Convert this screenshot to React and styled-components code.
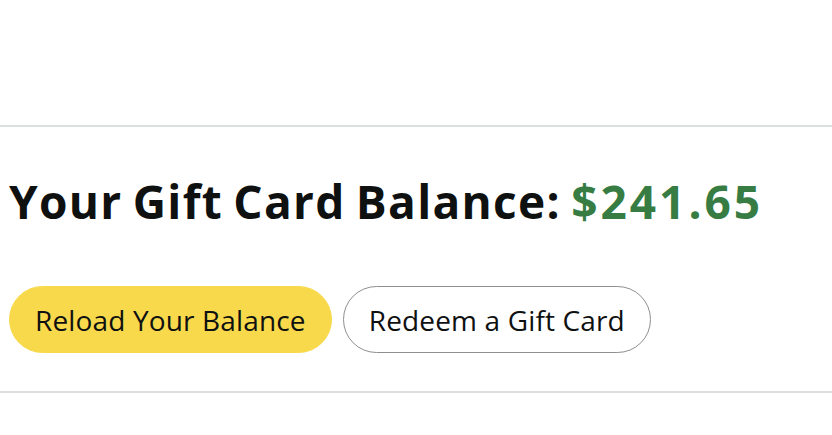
import React from 'react'
import styled, { createGlobalStyle } from 'styled-components'

const GlobalStyle = createGlobalStyle`
  * { box-sizing: border-box; }
  body {
    margin: 0;
    background: #fff;
    font-family: 'Open Sans', 'Noto Sans', Arial, sans-serif;
    color: #0f1111;
  }
`

const App = () => {
  return (
    <>
      <GlobalStyle />
      <Page>
        <Section>
          <Heading>
            Your Gift Card Balance: <Amount>$241.65</Amount>
          </Heading>
          <Actions>
            <Button $primary>Reload Your Balance</Button>
            <Button>Redeem a Gift Card</Button>
          </Actions>
        </Section>
      </Page>
    </>
  )
}

const Page = styled.div`
  padding-top: 125px;
  width: 832px;
  height: 435px;
  overflow: hidden;
`

const Section = styled.section`
  border-top: 2px solid #dcdfdf;
  border-bottom: 2px solid #dcdfdf;
  padding: 42px 0 38px 9px;
`

const Heading = styled.h1`
  margin: 0;
  font-size: 46px;
  font-weight: 700;
  line-height: 64px;
  letter-spacing: 1.3px;
  word-spacing: -3px;
  color: #0f1111;
`

const Amount = styled.span`
  color: #367c43;
  letter-spacing: 3px;
`

const Actions = styled.div`
  display: flex;
  gap: 11px;
  margin-top: 53px;
`

const Button = styled.button`
  height: 67px;
  padding: 0 25px;
  border-radius: 34px;
  font-family: 'Open Sans', 'Noto Sans', Arial, sans-serif;
  font-size: 28px;
  font-weight: 400;
  letter-spacing: 0.15px;
  color: #0f1111;
  background: ${p => (p.$primary ? '#f8d94c' : '#fff')};
  border: ${p => (p.$primary ? '1px solid #f8d94c' : '1.5px solid #8d9090')};
`

export default App
